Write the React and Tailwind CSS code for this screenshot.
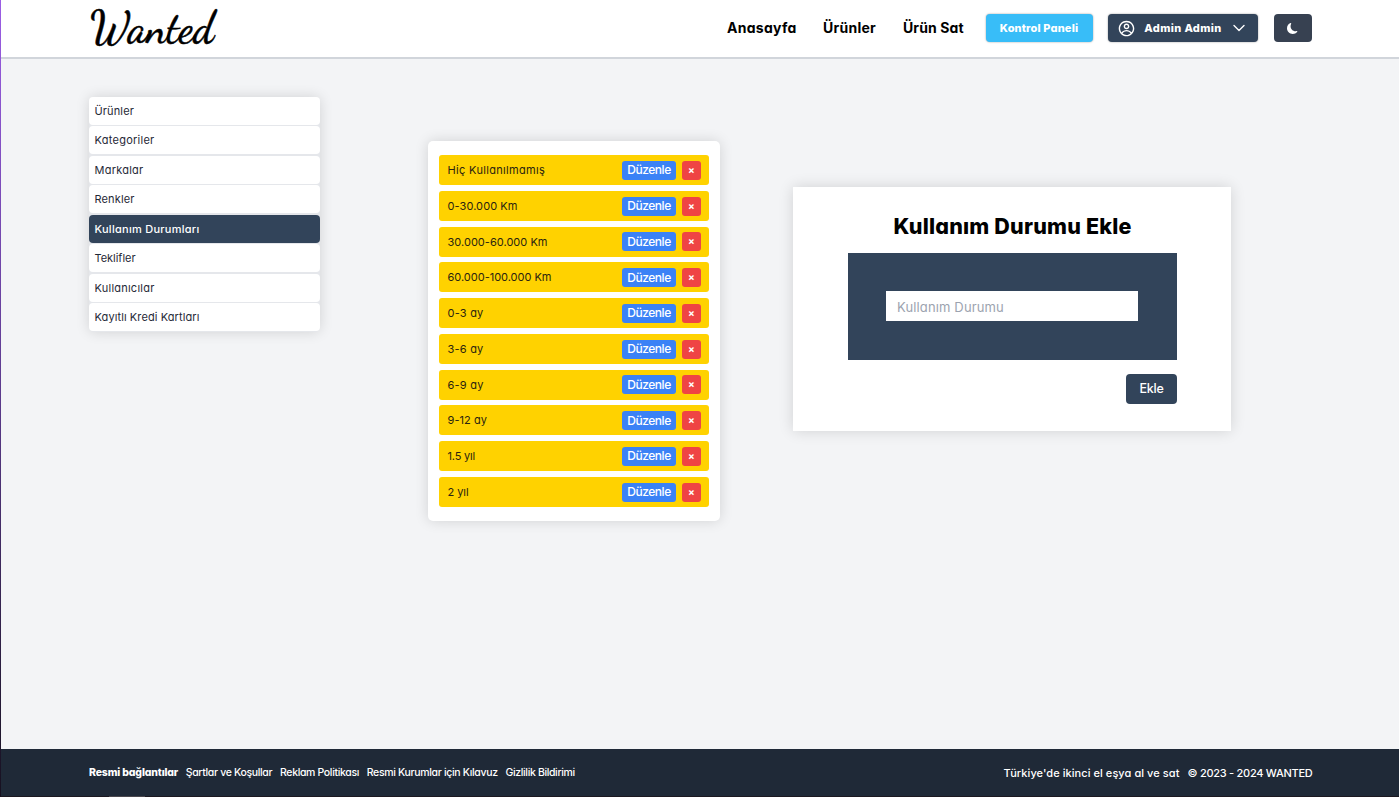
import { CgProfile } from "react-icons/cg";
import { BsMoonFill } from "react-icons/bs";

const navLinks = [
  { label: "Anasayfa", style: "w-[69px] tracking-[0.27px]" },
  { label: "Ürünler", style: "w-[53px] tracking-[0.25px]" },
  { label: "Ürün Sat", style: "w-[61px] tracking-[0.12px]" },
];

const menu = [
  { label: "Ürünler", style: "tracking-[0.13px]" },
  { label: "Kategoriler", style: "tracking-[0.26px]" },
  { label: "Markalar", style: "tracking-[0.24px]" },
  { label: "Renkler", style: "tracking-[0.13px]" },
  { label: "Kullanım Durumları", style: "tracking-[0.27px]", active: true },
  { label: "Teklifler", style: "tracking-[-0.03px]" },
  { label: "Kullanıcılar", style: "tracking-[0.23px]" },
  { label: "Kayıtlı Kredi Kartları", style: "tracking-[0.1px]" },
];

const statuses = [
  { label: "Hiç Kullanılmamış", style: "tracking-[0.33px]" },
  { label: "0-30.000 Km", style: "tracking-[0.08px]" },
  { label: "30.000-60.000 Km", style: "tracking-[0.03px]" },
  { label: "60.000-100.000 Km", style: "tracking-[-0.01px]" },
  { label: "0-3 ay", style: "tracking-[0.22px]" },
  { label: "3-6 ay", style: "tracking-[0.22px]" },
  { label: "6-9 ay", style: "tracking-[0.22px]" },
  { label: "9-12 ay", style: "tracking-[0.06px]" },
  { label: "1.5 yıl", style: "tracking-[-0.18px]" },
  { label: "2 yıl", style: "tracking-[-0.06px]" },
];

const footerLinks = [
  { label: "Şartlar ve Koşullar", style: "w-[86.5px] tracking-[-0.335px]" },
  { label: "Reklam Politikası", style: "w-[79px] tracking-[-0.348px]" },
  { label: "Resmi Kurumlar için Kılavuz", style: "w-[131px] tracking-[-0.332px]" },
  { label: "Gizlilik Bildirimi", style: "w-[70px] tracking-[-0.36px]" },
];

function Header() {
  return (
    <header className="flex h-[59px] shrink-0 justify-between border-b-2 border-[#d1d5db] bg-white pr-[87px] pl-[88px]">
      <svg className="h-[57px] w-[140px]" viewBox="0 0 140 57" aria-label="Wanted">
        <text
          x="1"
          y="41.5"
          textLength="124"
          lengthAdjust="spacingAndGlyphs"
          className="fill-black stroke-black stroke-[0.5px] font-['Dancing_Script',cursive] text-[44px] font-medium"
        >
          Wanted
        </text>
      </svg>
      <div className="flex h-[56px] items-center">
        <nav className="mr-[21.5px] flex gap-[27px] pb-[2px] text-[14px] font-bold whitespace-nowrap text-black">
          {navLinks.map((l) => (
            <a key={l.label} className={l.style}>{l.label}</a>
          ))}
        </nav>
        <button className="mr-[15px] flex h-7 w-[107px] items-center justify-center rounded-[4px] bg-[#38bdf8] text-[11px] font-extrabold tracking-[0.15px] whitespace-nowrap text-white shadow-[0_0_2px_rgba(0,0,0,0.4)]">
          Kontrol Paneli
        </button>
        <button className="mr-[16.5px] flex h-7 w-[150px] items-center rounded-[4px] bg-[#32445a] pl-[10.5px] text-white shadow-[0_0_2px_rgba(0,0,0,0.4)]">
          <CgProfile className="size-[17px]" />
          <span className="ml-[9px] w-[78px] text-[11px] font-extrabold tracking-[0.38px] whitespace-nowrap">Admin Admin</span>
          <svg className="ml-[11px] h-3 w-3 fill-none stroke-white stroke-[1.4]" viewBox="0 0 12 12" strokeLinecap="round" strokeLinejoin="round">
            <path d="M1 3.5 6 8.5 11 3.5" />
          </svg>
        </button>
        <button className="flex h-7 w-[38px] items-center justify-center rounded-[4px] bg-[#374151] pr-px text-white">
          <BsMoonFill className="size-[11px]" />
        </button>
      </div>
    </header>
  );
}

function Sidebar() {
  return (
    <ul className="h-[234.5px] w-[231px] rounded-[5px] bg-[#e5e7eb] text-[11px] shadow-[0_0_14px_rgba(0,0,0,0.14)]">
      {menu.map((m) => (
        <li
          key={m.label}
          className={
            "mb-[1.43px] flex h-7 items-center rounded-[4px] pt-[0.6px] pl-[5.5px] " +
            m.style +
            (m.active ? " bg-[#32445a] font-medium text-white" : " bg-white text-[#1f2937]")
          }
        >
          {m.label}
        </li>
      ))}
    </ul>
  );
}

function StatusList() {
  return (
    <ul className="flex h-[380px] w-[292px] flex-col gap-[5.65px] rounded-[5px] bg-white px-[11px] pt-[14px] shadow-[0_0_14px_rgba(0,0,0,0.14)]">
      {statuses.map((s) => (
        <li key={s.label} className="flex h-[30.14px] shrink-0 items-center rounded-[3px] bg-[#ffd200] pt-[0.4px] pr-2 pl-[8.5px]">
          <span className={"grow text-[11px] text-[#2a2410] " + s.style}>{s.label}</span>
          <button className="mr-[6px] flex h-[19px] w-[54px] items-center justify-center rounded-[3px] bg-[#3b82f6] text-[12px] font-medium tracking-[-0.46px] text-white">
            Düzenle
          </button>
          <button className="flex h-[19px] w-[19px] items-center justify-center rounded-[3px] bg-[#ef4444] text-[10px] font-bold text-white">
            ×
          </button>
        </li>
      ))}
    </ul>
  );
}

function AddForm() {
  return (
    <section className="flex h-[244px] w-[438px] flex-col bg-white pr-[54px] pl-[55px] shadow-[0_0_14px_rgba(0,0,0,0.14)]">
      <h1 className="mt-[24px] mb-[12px] h-[30px] text-center text-[21.5px] leading-[30px] font-extrabold tracking-[0.2px] whitespace-nowrap text-black">
        Kullanım Durumu Ekle
      </h1>
      <div className="h-[107px] bg-[#32445a] pt-[38px] pr-[39px] pl-[38px]">
        <input
          placeholder="Kullanım Durumu"
          className="block h-[30px] w-full bg-white px-[11px] pt-px text-[13px] tracking-[0.14px] outline-none placeholder:text-[#9ca3af]"
        />
      </div>
      <button className="mt-[14px] h-[30px] w-[51px] self-end rounded-[4px] bg-[#32445a] text-[12.5px] font-medium tracking-[-0.26px] text-white">
        Ekle
      </button>
    </section>
  );
}

function Footer() {
  return (
    <footer className="flex h-[48px] shrink-0 flex-col bg-[#1f2937] text-white">
      <div className="flex h-[47px] items-center justify-between pr-[87px] pl-[88px] whitespace-nowrap">
        <div className="flex gap-[7.75px] text-[10.5px] font-medium">
          <span className="w-[89px] font-extrabold tracking-[-0.15px]">Resmi bağlantılar</span>
          {footerLinks.map((l) => (
            <a key={l.label} className={l.style}>{l.label}</a>
          ))}
        </div>
        <div className="flex gap-2 pt-px text-[11px] font-medium">
          <span className="w-[176px] tracking-[0.066px]">Türkiye'de ikinci el eşya al ve sat</span>
          <span className="w-[124.5px] tracking-[-0.27px]">© 2023 - 2024 WANTED</span>
        </div>
      </div>
      <div className="h-px bg-[#1c1820] pl-[108px]">
        <div className="h-px w-9 bg-[#4a474d]" />
      </div>
    </footer>
  );
}

export default function App() {
  return (
    <div className="flex h-[797px] w-[1399px] overflow-hidden font-['Inter',sans-serif] [font-feature-settings:'cv11']">
      <div className="w-px shrink-0 bg-linear-to-b from-[#9b5de5] via-[#5b3a8c] to-[#16101f]" />
      <div className="flex min-w-0 grow flex-col">
        <Header />
        <main className="flex grow items-start bg-[#f3f4f6] pl-[88px]">
          <div className="pt-[38px]"><Sidebar /></div>
          <div className="ml-[108px] pt-[82px]"><StatusList /></div>
          <div className="ml-[73px] pt-[128px]"><AddForm /></div>
        </main>
        <Footer />
      </div>
    </div>
  );
}
